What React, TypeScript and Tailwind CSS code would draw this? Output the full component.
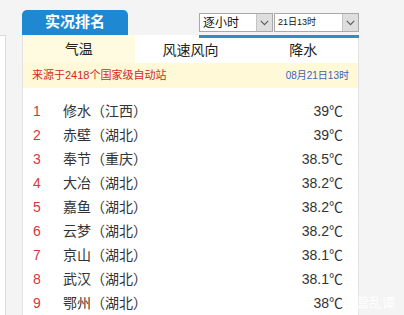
import React from 'react';

const rows = [
  { name: '修水（江西）', value: '39℃' },
  { name: '赤壁（湖北）', value: '39℃' },
  { name: '奉节（重庆）', value: '38.5℃' },
  { name: '大冶（湖北）', value: '38.2℃' },
  { name: '嘉鱼（湖北）', value: '38.2℃' },
  { name: '云梦（湖北）', value: '38.2℃' },
  { name: '京山（湖北）', value: '38.1℃' },
  { name: '武汉（湖北）', value: '38.1℃' },
  { name: '鄂州（湖北）', value: '38℃' },
];

function Chevron() {
  return (
    <svg width="9" height="6" viewBox="0 0 9 6" fill="none">
      <path d="M0.8 0.8 L4.5 4.6 L8.2 0.8" stroke="#5a5a5a" strokeWidth="1.1" />
    </svg>
  );
}

function Select({ label, width, small }: { label: string; width: string; small?: boolean }) {
  return (
    <div className={`${width} h-[19px] flex items-stretch bg-white border border-[#a9a9a9]`}>
      <span className={`flex-1 flex items-center pl-[3px] text-[#111] ${small ? 'text-[9px]' : 'text-[12px]'}`}>{label}</span>
      <span className="w-[16px] flex items-center justify-center bg-[#dedede] border-l border-[#c4c4c4]">
        <Chevron />
      </span>
    </div>
  );
}

export default function App() {
  return (
    <div className="flex w-[404px] h-[315px] overflow-hidden bg-[#f4f4f4] font-['Liberation_Sans','Noto_Sans_CJK_SC',sans-serif] relative">
      {/* left neighbour strip */}
      <div className="w-[6px] mt-[35px] bg-white border-t border-r border-[#dcdcdc]" />

      <div className="ml-[16px] w-[337px] flex flex-col">
        {/* Header: title tab + selects */}
        <div className="h-[37px] flex">
          <div className="self-end w-[106px] h-[25px] rounded-t-[5px] bg-[#1f88d2] flex items-center justify-center text-white text-[15px] font-bold">
            实况排名
          </div>
          <div className="ml-[71px] mt-[13px] flex gap-[1px]">
            <Select label="逐小时" width="w-[74px]" />
            <Select label="21日13时" width="w-[85px]" small />
          </div>
        </div>

        {/* Body */}
        <div className="flex-1 bg-white border-x border-[#e3e3e3] relative">
          <div className="absolute top-0 left-[176px] right-[-1px] h-[3px] bg-[#2d8fc6]" />

          <div className="h-[28px] grid grid-cols-3 text-[14px] text-[#222]">
            <div className="bg-[#fffbe0] flex items-center justify-center">气温</div>
            <div className="flex items-center justify-center pt-[3px]">风速风向</div>
            <div className="flex items-center justify-center pt-[3px] pl-[2px]">降水</div>
          </div>

          <div className="h-[25px] bg-[#fff9d8] flex items-center justify-between px-[9px]">
            <span className="text-[11px] text-[#d4281e]">来源于2418个国家级自动站</span>
            <span className="text-[10px] text-[#3b64b5]">08月21日13时</span>
          </div>

          <div className="pt-[11px]">
            {rows.map((r, i) => (
              <div key={i} className="h-[24px] flex items-center text-[14px]">
                <span className="w-[40px] pl-[10px] text-[#d6363c]">{i + 1}</span>
                <span className="text-[#333]">{r.name}</span>
                <span className="ml-auto pr-[15px] text-[#333]">{r.value}</span>
              </div>
            ))}
          </div>
        </div>
      </div>

      {/* watermark */}
      <span className="absolute right-[9px] bottom-[3px] text-[13px] text-white/90">营乱谭</span>
    </div>
  );
}
